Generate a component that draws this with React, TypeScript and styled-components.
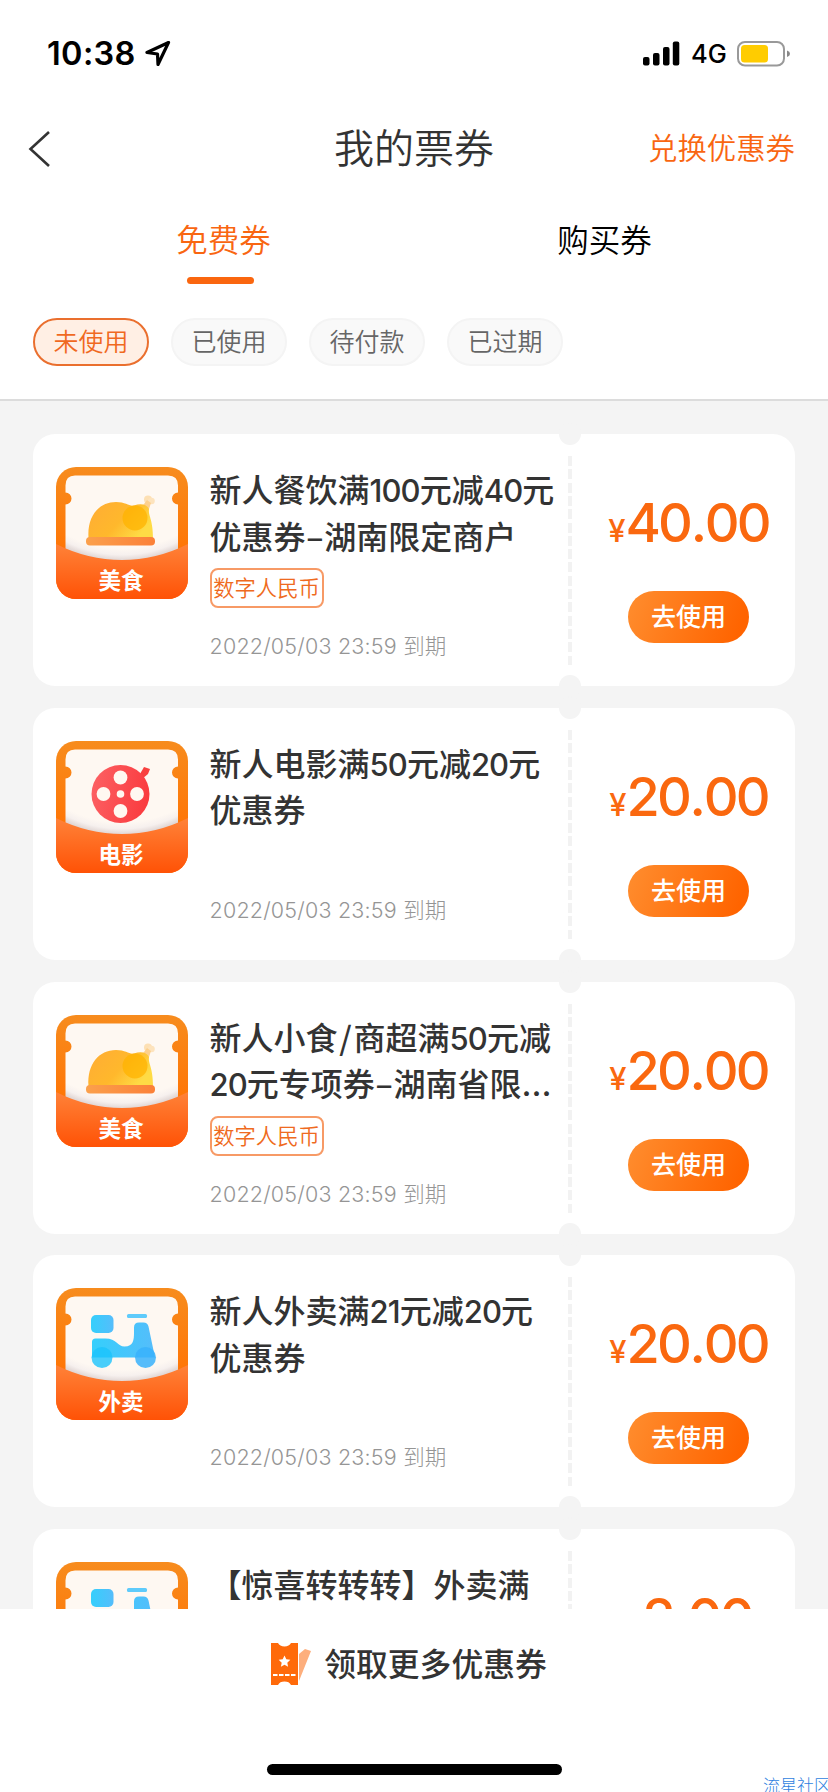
import React from 'react';
import styled, { createGlobalStyle } from 'styled-components';

const GlobalStyle = createGlobalStyle`
  * { box-sizing: border-box; }
  html, body { margin: 0; padding: 0; }
  body {
    width: 828px;
    height: 1792px;
    overflow: hidden;
    background: #f4f4f4;
    color: #333;
    font-family: "Noto Sans CJK SC", sans-serif;
  }
  button { font-family: inherit; padding: 0; margin: 0; border: 0; background: none; }
`;

const Screen = styled.div`
  width: 828px;
  height: 1792px;
  display: flex;
  flex-direction: column;
  overflow: hidden;
`;

const Header = styled.header`
  flex: none;
  height: 401px;
  background: #fff;
  border-bottom: 2px solid #dcdcdc;
`;

const StatusBar = styled.div`
  display: flex;
  align-items: center;
  height: 107px;
  padding: 0 37px 0 47px;
`;

const Clock = styled.span`
  font: 600 32.5px/40px Inter, sans-serif;
  letter-spacing: 0.35px;
  color: #000;
  width: 98px;
  white-space: nowrap;
`;

const StatusRight = styled.div`
  display: flex;
  align-items: center;
  margin-left: auto;
`;

const Network = styled.span`
  font: 500 25.5px/36px Inter, sans-serif;
  color: #000;
  width: 46px;
  padding-left: 11px;
  margin-right: 11px;
  letter-spacing: -0.1px;
  padding-top: 1px;
`;

const NavBar = styled.nav`
  display: grid;
  grid-template-columns: 1fr auto 1fr;
  align-items: center;
  height: 83px;
  padding: 0 33px 0 28px;
`;

const PageTitle = styled.h1`
  margin: 0;
  padding: 0 0 5px 5px;
  font-size: 40px;
  line-height: 60px;
  font-weight: 350;
  color: #333;
`;

const RedeemLink = styled.button`
  justify-self: end;
  padding-bottom: 6px;
  font-size: 29.4px;
  line-height: 44px;
  font-weight: 350;
  color: #f96611;
`;

const Tabs = styled.div`
  display: grid;
  grid-template-columns: 1fr 1fr;
  height: 128px;
  padding: 25px 33px 0;
`;

const Tab = styled.button<{ $active?: boolean }>`
  display: flex;
  flex-direction: column;
  align-items: center;
  justify-content: flex-start;
  font-size: 31.5px;
  line-height: 46px;
  font-weight: 350;
  color: ${(p) => (p.$active ? '#f96611' : '#000')};
`;

const TabLine = styled.span`
  width: 67px;
  height: 7px;
  border-radius: 4px;
  background: #fa660f;
  margin: 16px 7px 0 0;
`;

const Filters = styled.div`
  display: flex;
  gap: 22px;
  padding: 0 33px;
`;

const Chip = styled.button<{ $active?: boolean }>`
  width: 116px;
  height: 48px;
  padding-bottom: 4px;
  border-radius: 24px;
  border: 2px solid ${(p) => (p.$active ? '#ea6f2e' : '#f4f4f4')};
  background: ${(p) => (p.$active ? '#ffefe4' : '#f9f9f9')};
  color: ${(p) => (p.$active ? '#f0691f' : '#666')};
  font-size: 25px;
  line-height: 40px;
  font-weight: 350;
`;

const List = styled.main`
  flex: 1;
  min-height: 0;
  overflow: hidden;
  display: flex;
  flex-direction: column;
  gap: 21.75px;
  padding: 33px 33px 0;
`;

const Card = styled.article`
  position: relative;
  flex: none;
  display: flex;
  height: 252px;
  border-radius: 22px;
  background: #fff;
`;

const Notch = styled.i<{ $bottom?: boolean }>`
  position: absolute;
  left: 526px;
  ${(p) => (p.$bottom ? 'bottom: -11px;' : 'top: -11px;')}
  width: 22px;
  height: 22px;
  border-radius: 50%;
  background: #f4f4f4;
`;

const CardMain = styled.div`
  display: flex;
  width: 535px;
  padding: 33px 0 0 22.5px;
`;

const Info = styled.div<{ $tagged?: boolean }>`
  display: flex;
  flex-direction: column;
  width: 350px;
  height: ${(p) => (p.$tagged ? 194 : 184)}px;
  margin-left: 22px;
`;

const CouponTitle = styled.h2`
  margin: 0;
  font-size: 32px;
  font-weight: 500;
  color: #333;
  white-space: nowrap;
`;

const TitleLine = styled.div`
  height: 46.6px;
  line-height: 43px;
`;

const Digits = styled.span`
  font-family: Inter, sans-serif;
  font-size: 31px;
  line-height: 0;
  letter-spacing: -0.9px;
`;

const Mark = styled.span<{ $gap: number }>`
  padding: 0 ${(p) => p.$gap}px;
`;

const Ellipsis = styled.span`
  font-family: Inter, sans-serif;
  font-size: 33px;
  line-height: 0;
`;

const Tag = styled.span`
  align-self: flex-start;
  width: 114px;
  height: 40px;
  margin-top: 8px;
  border: 2px solid #f79a66;
  border-radius: 8px;
  font-size: 21.3px;
  line-height: 34px;
  text-align: center;
  font-weight: 350;
  color: #ef6a20;
  white-space: nowrap;
`;

const Expiry = styled.time`
  margin-top: auto;
  font-family: Inter, "Noto Sans CJK SC", sans-serif;
  font-size: 21.5px;
  line-height: 30px;
  font-weight: 300;
  letter-spacing: 0.2px;
  color: #959595;
  white-space: nowrap;
`;

const Divider = styled.div`
  width: 4px;
  height: 209px;
  margin-top: 22px;
  background: repeating-linear-gradient(to bottom, #f2f2f2 0 10px, transparent 10px 13.3px);
`;

const CardSide = styled.div`
  flex: 1;
  display: flex;
  flex-direction: column;
  align-items: center;
  padding: 52px 0 0 10px;
`;

const Price = styled.div`
  display: flex;
  align-items: baseline;
  height: 74px;
  font-family: Inter, sans-serif;
  font-size: 54px;
  line-height: 74px;
  font-weight: 500;
  letter-spacing: -2.8px;
  color: #fa680f;
`;

const Yen = styled.span`
  font-size: 31px;
  letter-spacing: 0;
`;

const Point = styled.span`
  margin: 0 0.5px;
`;

const UseButton = styled.button`
  width: 121px;
  height: 52px;
  margin-top: 31px;
  padding-bottom: 4px;
  border-radius: 26px;
  background: linear-gradient(110deg, #ff8b2c 5%, #ff6400 90%);
  color: #fff;
  font-size: 25px;
  line-height: 48px;
  font-weight: 500;
`;

const Footer = styled.footer`
  flex: none;
  display: flex;
  flex-direction: column;
  align-items: center;
  height: 183px;
  background: #fff;
`;

const MoreLink = styled.button`
  display: flex;
  align-items: center;
  gap: 12px;
  height: 110px;
  margin-right: 10px;
  font-size: 31.8px;
  font-weight: 500;
  color: #333;
`;

const MoreText = styled.span`
  padding-bottom: 4px;
`;

const HomeIndicator = styled.div`
  width: 295px;
  height: 11px;
  margin-top: 45px;
  border-radius: 6px;
  background: #000;
`;

const Watermark = styled.span`
  position: absolute;
  left: 763px;
  top: 1773px;
  font-size: 17px;
  line-height: 24px;
  font-weight: 300;
  color: #2f7fe0;
  white-space: nowrap;
`;

const BadgeLabel = styled.text`
  font-family: "Noto Sans CJK SC", sans-serif;
  font-size: 22.5px;
  font-weight: 700;
  fill: #fff;
  text-anchor: middle;
`;

const BadgeArt = styled.svg`
  flex: none;
`;

type Kind = 'food' | 'movie' | 'delivery';

const labels: Record<Kind, string> = { food: '美食', movie: '电影', delivery: '外卖' };

function Roast() {
  return (
    <g>
      <circle cx="92" cy="32.500" r="4" fill="#fde0b4" />
      <circle cx="95.500" cy="34" r="3.300" fill="#fde3bd" />
      <path d="M91 33l4 3-3 9-7-4z" fill="#fdd08d" />
      <path d="M32.500 71C31 49 43 35 60 35c10 0 13 4.500 18 3.500 7-2.500 13-1 15 3.500-1 7 4 10 4 29z" fill="url(#roast)" />
      <circle cx="79" cy="51" r="12.500" fill="#ffb300" opacity=".75" />
      <rect x="30" y="70" width="69" height="8.500" rx="4" fill="url(#plate)" />
    </g>
  );
}

function Reel() {
  return (
    <g>
      <path d="M84 33l4-7 6 2-2 5-6 5z" fill="#f8403f" />
      <circle cx="64.500" cy="53" r="29" fill="url(#reel)" />
      <g fill="#fff8f1">
        <circle cx="64.500" cy="36.500" r="6.900" />
        <circle cx="64.500" cy="70" r="6.900" />
        <circle cx="47.500" cy="53" r="6.900" />
        <circle cx="81" cy="53" r="6.900" />
        <circle cx="64.500" cy="53" r="3.800" />
      </g>
    </g>
  );
}

function Scooter() {
  return (
    <g>
      <rect x="35" y="27" width="22.500" height="18" rx="5" fill="url(#sky)" />
      <rect x="71" y="26" width="20" height="4" rx="1.500" fill="#5fcbfb" />
      <path d="M36 54q0-3.500 3.500-3.500h10c11 0 12 8 19 8 9 0 9.500-7 9.500-14v-5q0-5 5-5h4.500q4 0 5 4l6.500 31H36z" fill="url(#sky)" />
      <circle cx="46" cy="69.500" r="10.500" fill="#1cc3fb" opacity=".8" />
      <circle cx="89.500" cy="69.500" r="10.500" fill="#38b2fb" opacity=".85" />
    </g>
  );
}

function Badge({ kind }: { kind: Kind }) {
  return (
    <BadgeArt width="132" height="132" viewBox="0 0 132 132">
      <defs>
        <linearGradient id="shell" x1="0" y1="0" x2="0" y2="1">
          <stop offset="0" stopColor="#f78c1e" />
          <stop offset=".65" stopColor="#ff7505" />
        </linearGradient>
        <linearGradient id="pocket" x1="0" y1="0" x2="0" y2="1">
          <stop offset="0" stopColor="#ff8238" />
          <stop offset="1" stopColor="#ff5206" />
        </linearGradient>
        <linearGradient id="roast" x1="0" y1="0" x2="1" y2=".5">
          <stop offset="0" stopColor="#ffac35" />
          <stop offset=".6" stopColor="#ffb82c" />
          <stop offset="1" stopColor="#fedb45" />
        </linearGradient>
        <linearGradient id="plate" x1="0" y1="0" x2="1" y2="0">
          <stop offset="0" stopColor="#fba04c" />
          <stop offset="1" stopColor="#fb8038" />
        </linearGradient>
        <linearGradient id="reel" x1="0" y1=".4" x2="1" y2=".6">
          <stop offset="0" stopColor="#fc5f62" />
          <stop offset="1" stopColor="#fa3a3e" />
        </linearGradient>
        <linearGradient id="sky" x1="0" y1="0" x2="1" y2="0">
          <stop offset="0" stopColor="#35cffc" />
          <stop offset="1" stopColor="#55bdfb" />
        </linearGradient>
        <radialGradient id="shade" gradientUnits="userSpaceOnUse" cx="66" cy="-36" r="129">
          <stop offset=".91" stopColor="#fef8f2" />
          <stop offset=".96" stopColor="#f6f0ee" />
          <stop offset="1" stopColor="#e2d8d6" />
        </radialGradient>
        <clipPath id="frame"><rect width="132" height="132" rx="20" /></clipPath>
      </defs>
      <g clipPath="url(#frame)">
        <rect width="132" height="132" fill="url(#shell)" />
        <path d="M19 8.500h93q10 0 10 10V25.500a6 6 0 0 0 0 12V100H9.500V37.500a6 6 0 0 0 0-12V18.500q0-10 9.500-10z" fill="url(#shade)" />
        {kind === 'food' && <Roast />}
        {kind === 'movie' && <Reel />}
        {kind === 'delivery' && <Scooter />}
        <path d="M0 77Q32 93 66 93t66-16v55H0z" fill="url(#pocket)" />
      </g>
      <BadgeLabel x="65" y="122">{labels[kind]}</BadgeLabel>
    </BadgeArt>
  );
}

function renderLine(line: string) {
  return line.split(/(\d+|…|\/|–)/).map((part, i) => {
    if (i % 2 === 0) return part;
    if (part === '…') return <Ellipsis key={i}>{part}</Ellipsis>;
    if (part === '/') return <Mark key={i} $gap={1.8}>{part}</Mark>;
    if (part === '–') return <Mark key={i} $gap={0.7}>{part}</Mark>;
    return <Digits key={i}>{part}</Digits>;
  });
}

interface Coupon {
  kind: Kind;
  lines: string[];
  tag?: string;
  price: string;
}

const coupons: Coupon[] = [
  { kind: 'food', lines: ['新人餐饮满100元减40元', '优惠券–湖南限定商户'], tag: '数字人民币', price: '40.00' },
  { kind: 'movie', lines: ['新人电影满50元减20元', '优惠券'], price: '20.00' },
  { kind: 'food', lines: ['新人小食/商超满50元减', '20元专项券–湖南省限…'], tag: '数字人民币', price: '20.00' },
  { kind: 'delivery', lines: ['新人外卖满21元减20元', '优惠券'], price: '20.00' },
  { kind: 'delivery', lines: ['【惊喜转转转】外卖满'], price: '2.00' },
];

function CouponCard({ kind, lines, tag, price }: Coupon) {
  const [yuan, cents] = price.split('.');
  return (
    <Card>
      <CardMain>
        <Badge kind={kind} />
        <Info $tagged={!!tag}>
          <CouponTitle>
            {lines.map((line) => <TitleLine key={line}>{renderLine(line)}</TitleLine>)}
          </CouponTitle>
          {tag && <Tag>{tag}</Tag>}
          <Expiry>2022/05/03 23:59 到期</Expiry>
        </Info>
      </CardMain>
      <Divider />
      <CardSide>
        <Price><Yen>¥</Yen>{yuan}<Point>.</Point>{cents}</Price>
        <UseButton>去使用</UseButton>
      </CardSide>
      <Notch />
      <Notch $bottom />
    </Card>
  );
}

export default function App() {
  return (
    <Screen>
      <GlobalStyle />
      <Header>
        <StatusBar>
          <Clock>10:38</Clock>
          <svg width="26" height="27" viewBox="0 0 26 27" fill="none" stroke="#000" strokeWidth="3.200" strokeLinejoin="round">
            <path d="M23.500 2.500L2 12.500l10.500 1.500.5 10.500z" />
          </svg>
          <StatusRight>
            <svg width="37" height="25" viewBox="0 0 37 25">
              <rect x="0" y="16" width="6.500" height="8.500" rx="2" />
              <rect x="10" y="12" width="6.500" height="12.500" rx="2" />
              <rect x="20" y="6" width="6.500" height="18.500" rx="2" />
              <rect x="29.800" y="0.500" width="6.500" height="24" rx="2" />
            </svg>
            <Network>4G</Network>
            <svg width="54" height="26" viewBox="0 0 54 26">
              <rect x="1" y="1" width="46" height="23.500" rx="7" fill="none" stroke="#999" strokeWidth="2" />
              <rect x="4" y="4" width="27" height="17.500" rx="3.500" fill="#fc0" />
              <path d="M50 9.500q3 1 3 3.300t-3 3.300z" fill="#888" />
            </svg>
          </StatusRight>
        </StatusBar>
        <NavBar>
          <svg width="24" height="38" viewBox="0 0 24 38" fill="none" stroke="#333" strokeWidth="2.600">
            <path d="M21 2L2.500 19 21 36" />
          </svg>
          <PageTitle>我的票券</PageTitle>
          <RedeemLink>兑换优惠券</RedeemLink>
        </NavBar>
        <Tabs>
          <Tab $active>免费券<TabLine /></Tab>
          <Tab>购买券</Tab>
        </Tabs>
        <Filters>
          <Chip $active>未使用</Chip>
          <Chip>已使用</Chip>
          <Chip>待付款</Chip>
          <Chip>已过期</Chip>
        </Filters>
      </Header>
      <List>
        {coupons.map((c, i) => <CouponCard key={i} {...c} />)}
      </List>
      <Footer>
        <MoreLink>
          <svg width="41" height="44" viewBox="0 0 41 44">
            <path d="M28 12l6-5 6 2-12 30z" fill="#fdae7c" />
            <path d="M0 1h7a7 5.500 0 0 0 13 0h7v42h-7a7 5.500 0 0 0-13 0H0z" fill="#ff6a0a" />
            <path d="M13.500 13.500l1.800 3.800 4 .5-3 2.900.8 4.100-3.600-2-3.600 2 .8-4.100-3-2.900 4-.5z" fill="#fff" />
            <path d="M2 33h24" stroke="#fff" strokeWidth="1.800" strokeDasharray="4.500 1.500" />
          </svg>
          <MoreText>领取更多优惠券</MoreText>
        </MoreLink>
        <HomeIndicator />
      </Footer>
      <Watermark>流星社区</Watermark>
    </Screen>
  );
}
